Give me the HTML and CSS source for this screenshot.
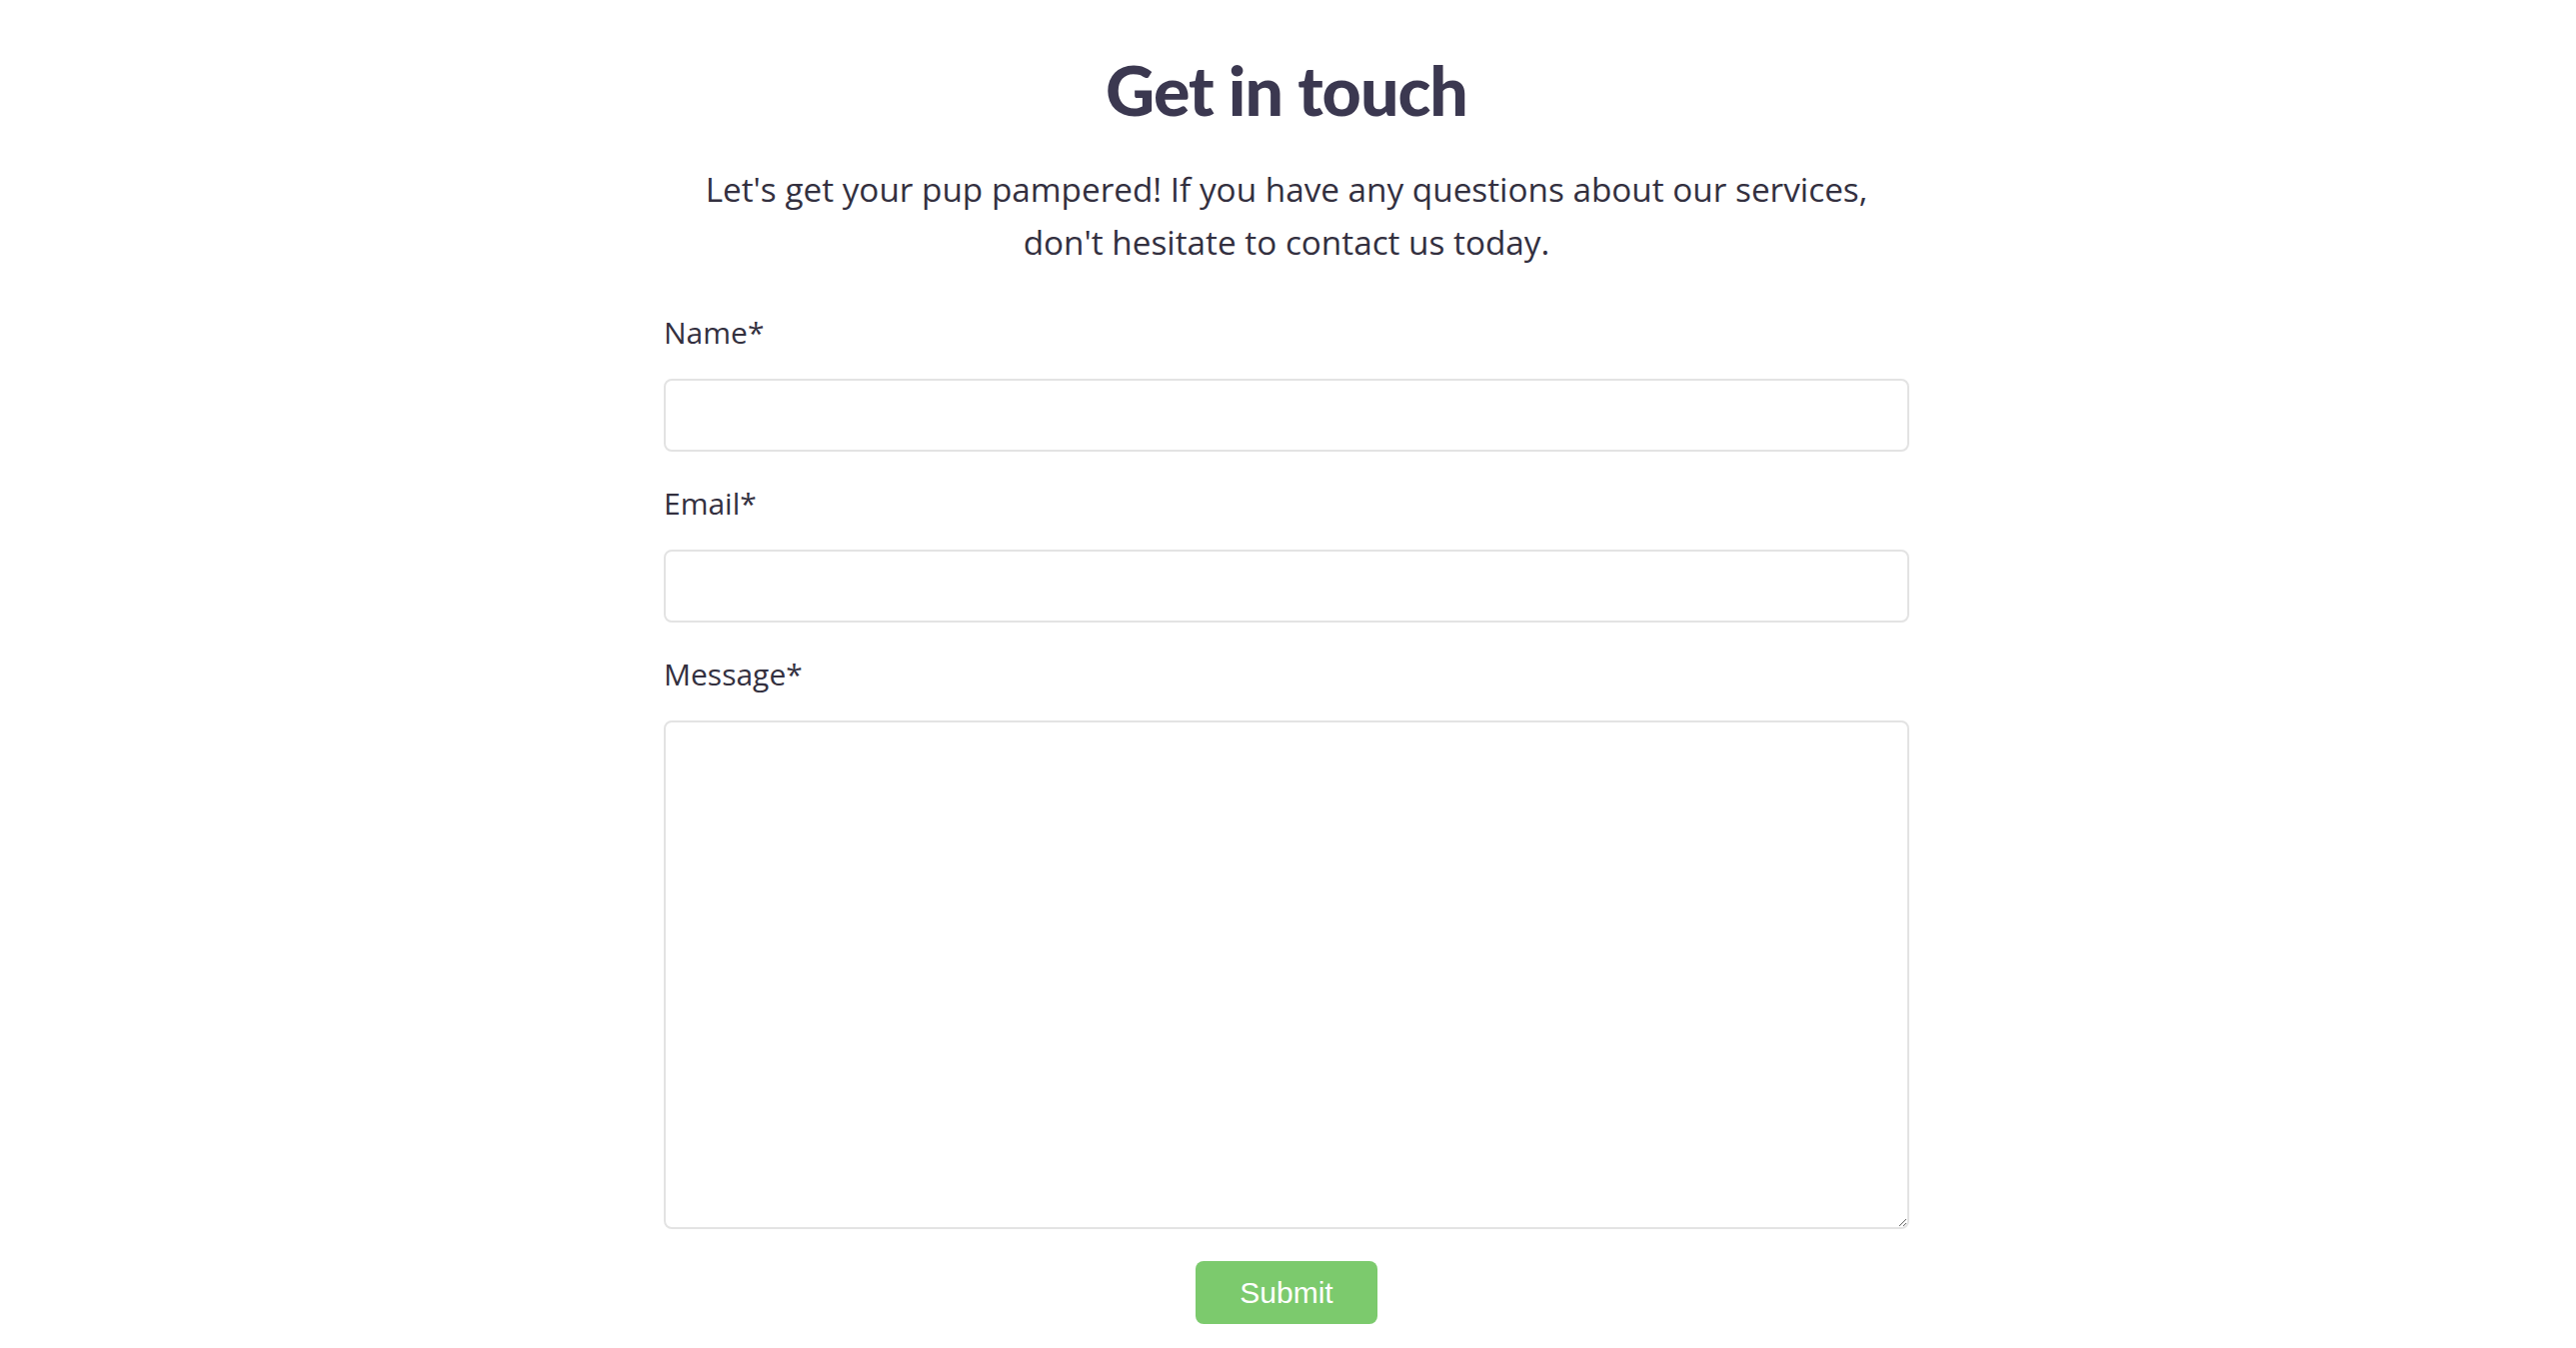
FILE: index.html
```html
<!DOCTYPE html>
<html lang="en">
<head>
<meta charset="utf-8">
<title>Get in touch</title>
<link rel="stylesheet" href="styles.css">
</head>
<body>
<main class="contact">
  <h1 class="title">Get in touch</h1>
  <p class="intro">Let's get your pup pampered! If you have any questions about our services, don't hesitate to contact us today.</p>
  <form class="form">
    <label class="label" for="name">Name*</label>
    <input class="field" id="name" type="text">
    <label class="label" for="email">Email*</label>
    <input class="field" id="email" type="email">
    <label class="label" for="message">Message*</label>
    <textarea class="field area" id="message"></textarea>
    <div class="actions"><button class="submit" type="button">Submit</button></div>
  </form>
</main>
</body>
</html>
```

FILE: styles.css
```css
html, body {
  margin: 0;
  padding: 0;
  background: #ffffff;
}
body {
  font-family: "Open Sans", "Noto Sans", sans-serif;
  color: #33303f;
}
.contact {
  width: 1246px;
  margin: 0 auto;
  padding-top: 40px;
  padding-right: 3px;
  display: flex;
  flex-direction: column;
}
.title {
  margin: 0;
  text-align: center;
  font-family: "Lato", "Noto Sans", sans-serif;
  font-weight: 900;
  font-size: 68px;
  line-height: 100px;
  color: #3b3850;
  letter-spacing: -1px;
}
.intro {
  margin: 23px auto 0;
  width: 1220px;
  text-align: center;
  font-size: 33.3px;
  line-height: 53px;
}
.form {
  display: flex;
  flex-direction: column;
  margin-top: 44px;
}
.label {
  font-size: 30px;
  line-height: 40px;
}
.field {
  box-sizing: border-box;
  margin: 26px 0 32px;
  height: 73px;
  border: 2px solid #e3e3e3;
  border-radius: 8px;
  background: #fff;
  font: inherit;
}
.area {
  height: 509px;
  resize: vertical;
  margin-bottom: 32px;
}
.actions {
  display: flex;
  justify-content: center;
}
.submit {
  width: 182px;
  height: 63px;
  border: none;
  border-radius: 8px;
  background: #7cca6d;
  color: #ffffff;
  font-family: "Liberation Sans", Arial, sans-serif;
  font-size: 30px;
}
```
